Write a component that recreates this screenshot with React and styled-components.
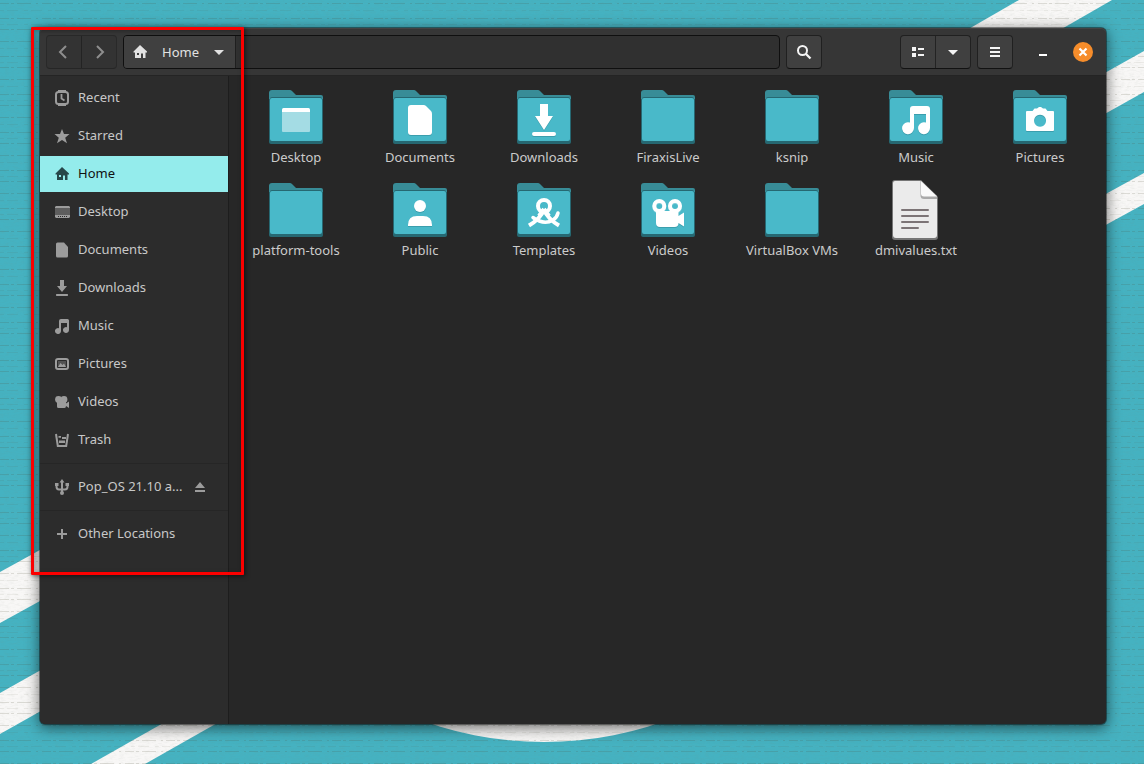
import React from "react";
import styled, { createGlobalStyle, css } from "styled-components";

const GlobalStyle = createGlobalStyle`
  *, *::before, *::after { box-sizing: border-box; }
  body {
    margin: 0;
    background: #45b1c0;
    font-family: "Noto Sans", "Open Sans", sans-serif;
    font-size: 13px;
    line-height: 17px;
    color: #cbcbcb;
  }
  button { font: inherit; color: inherit; padding: 0; margin: 0; cursor: pointer; }
  a { color: inherit; text-decoration: none; }
  svg { display: block; flex: none; }
`;

const Screen = styled.div`
  position: relative;
  display: flex;
  min-height: 100vh;
  padding: 28px 38px 40px 40px;
  overflow: hidden;
`;

const WallpaperArt = styled.svg`
  position: absolute;
  inset: 0;
  width: 100%;
  height: 100%;
`;

const Window = styled.main`
  position: relative;
  flex: 1;
  min-width: 0;
  display: flex;
  flex-direction: column;
  border-radius: 5px;
  background: #272727;
  box-shadow: 0 0 0 1px rgba(0, 0, 0, 0.4), 0 3px 14px 1px rgba(0, 0, 0, 0.55);
`;

const HeaderBar = styled.header`
  display: flex;
  align-items: center;
  gap: 6px;
  padding: 7px 13px 6px 6px;
  border-bottom: 1px solid #242424;
  border-radius: 5px 5px 0 0;
  background: #363636;
  box-shadow: inset 0 1px #434343;
`;

const ButtonGroup = styled.div`
  display: flex;
  flex: none;
  height: 34px;
  border: 1px solid ${(p) => (p.$dim ? "#292929" : "#202020")};
  border-bottom-color: ${(p) => (p.$dim ? "#262626" : "#121212")};
  border-radius: 4px;
  background: ${(p) => (p.$dim ? "#333333" : "#404040")};
  color: ${(p) => (p.$dim ? "#8e8e8e" : "#f4f4f4")};
  overflow: hidden;
`;

const ToolButton = styled.button`
  display: grid;
  place-items: center;
  width: 34px;
  border: 0;
  background: transparent;
  & + & { width: 35px; border-left: 1px solid ${(p) => (p.$dim ? "#292929" : "#232323")}; }
`;

const PathBar = styled.nav`
  display: flex;
  flex: 1;
  min-width: 0;
  height: 34px;
  border: 1px solid #0f0f0f;
  border-radius: 4px;
  background: #303030;
  overflow: hidden;
`;

const Crumb = styled.button`
  display: flex;
  align-items: center;
  padding: 0 8px;
  border: 0;
  border-right: 1px solid #1f1f1f;
  background: #404040;
  color: #e2e2e2;
`;

const CrumbLabel = styled.span`
  padding: 0 12px 0 14px;
`;

const ViewTools = styled.div`
  display: flex;
  align-items: center;
  gap: 6px;
  padding-left: 72px;
`;

const WindowControls = styled.div`
  display: flex;
  align-items: center;
  gap: 20px;
  padding-left: 14px;
`;

const WindowButton = styled.button`
  display: grid;
  place-items: center;
  width: 20px;
  height: 20px;
  border: 0;
  border-radius: 50%;
  background: ${(p) => (p.$close ? "#f68d2b" : "transparent")};
  color: #ffffff;
`;

const Body = styled.div`
  flex: 1;
  display: flex;
`;

const Sidebar = styled.nav`
  flex: none;
  display: flex;
  flex-direction: column;
  gap: 2px;
  width: 189px;
  padding-top: 4px;
  border-right: 1px solid #1d1d1d;
  border-radius: 0 0 0 5px;
  background: #2c2c2c;
`;

const PlaceRow = styled.div`
  display: flex;
  align-items: center;
  height: 36px;
  padding-right: 20px;
  color: #c8c8c8;
  ${(p) => p.$active && css`
    background: #94ecec;
    color: #111111;
  `}
`;

const PlaceLink = styled.a`
  flex: 1;
  min-width: 0;
  display: flex;
  align-items: center;
  gap: 8px;
  padding-left: 14px;
  svg { color: ${(p) => (p.$active ? "#27474a" : "#9c9c9c")}; }
`;

const PlaceName = styled.span`
  white-space: nowrap;
  padding-bottom: 1px;
`;

const EjectButton = styled.button`
  margin-left: 8px;
  border: 0;
  background: transparent;
  color: #9c9c9c;
`;

const Divider = styled.hr`
  width: 100%;
  height: 1px;
  margin: 3px 0;
  border: 0;
  background: #262626;
`;

const FileGrid = styled.section`
  flex: 1;
  min-width: 0;
  display: grid;
  grid-template-columns: repeat(auto-fill, 124px);
  align-content: start;
  row-gap: 12px;
  padding: 9px 4px 9px 5px;
`;

const FileItem = styled.a`
  display: flex;
  flex-direction: column;
  align-items: center;
  white-space: nowrap;
`;

const Highlight = styled.div`
  position: absolute;
  top: -1px;
  left: -9px;
  width: 213px;
  height: 548px;
  border: 3px solid #fb0000;
  border-radius: 1px;
  box-shadow: 1px 1px 5px rgba(0, 0, 0, 0.6), inset 1px 1px 4px rgba(0, 0, 0, 0.3);
  pointer-events: none;
`;

function Wallpaper() {
  return (
    <WallpaperArt viewBox="0 0 1144 764" preserveAspectRatio="xMidYMid slice" aria-hidden="true">
      <defs>
        <filter id="grain" x="0" y="0" width="100%" height="100%">
          <feTurbulence type="fractalNoise" baseFrequency="0.2 0.6" numOctaves="3" seed="4" />
          <feColorMatrix values="0 0 0 0 0.2  0 0 0 0 0.25  0 0 0 0 0.2  1.2 0 0 0 -0.5" />
        </filter>
        <pattern id="weave" width="83" height="38" patternUnits="userSpaceOnUse">
          <path
            d="M0 3.500H83M0 18.500H83M0 29.500H83"
            stroke="#4a4a30"
            strokeOpacity="0.16"
            strokeDasharray="9 2 3 3 14 5 2 4"
          />
          <path d="M0 10.500H83M0 24.500H83" stroke="#4a4a30" strokeOpacity="0.08" strokeDasharray="4 3 11 6" />
        </pattern>
      </defs>
      <rect width="1144" height="764" fill="#45b2c1" />
      <g fill="#f8f7f6">
        <path d="M1019 0H1112L968 83H875Z" />
        <path d="M1144 51V92L1060 139V98Z" />
        <path d="M1144 173V204L1060 250V219Z" />
        <path d="M0 572L80 528V579L0 623Z" />
        <path d="M0 693L80 648V689L0 734Z" />
        <path d="M91 764L195 705H249L145 764Z" />
        <circle cx="544" cy="385" r="357" />
      </g>
      <rect width="1144" height="764" fill="url(#weave)" />
      <rect width="1144" height="764" filter="url(#grain)" opacity="0.15" />
    </WallpaperArt>
  );
}

const glyphs = {
  back: <path d="M10 2L4 8l6 6" fill="none" stroke="currentColor" strokeWidth="2" />,
  forward: <path d="M6 2l6 6-6 6" fill="none" stroke="currentColor" strokeWidth="2" />,
  caret: <path d="M3 6h10L8 11z" />,
  search: (
    <>
      <circle cx="6.500" cy="6.500" r="4.500" fill="none" stroke="currentColor" strokeWidth="2" />
      <path d="M10 10l4.500 4.500" fill="none" stroke="currentColor" strokeWidth="2.300" />
    </>
  ),
  list: <path d="M2 3h4v4H2zM2 9h4v4H2zM8 4h6v2H8zM8 10h6v2H8z" />,
  menu: <path d="M3 3h10v2H3zM3 7h10v2H3zM3 11h10v2H3z" />,
  minimize: <path d="M4 10h8v2H4z" />,
  close: <path d="M4.500 4.500l7 7M11.500 4.500l-7 7" fill="none" stroke="currentColor" strokeWidth="2.200" />,
  recent: (
    <>
      <rect x="2" y="2" width="12" height="12" rx="2.500" fill="none" stroke="currentColor" strokeWidth="2" />
      <path d="M4 0h8v2H4zM4 14h8v2H4z" />
      <path d="M7.500 4v4.500l3 2" fill="none" stroke="currentColor" strokeWidth="1.800" />
    </>
  ),
  star: <path d="M8 1l2 5h5.500l-4.300 3.700L13 15.300l-5-3.400-5 3.400 1.800-5.600L.5 6H6z" />,
  home: <path d="M8 1l7 6.500V8.500H13.500V14H11V9.500H9V14H3V8.500H1.500V7.500zM5 9v2h2V9z" fillRule="evenodd" />,
  desktop: (
    <>
      <path d="M1 4h15v7H1z" opacity=".45" />
      <path d="M2 2h13l1 1v1H1V3zM1 11h15v2l-1 1H2l-1-1z" />
      <path d="M4 12.500h1M6 12.500h1M8 12.500h1M10 12.500h1M12 12.500h1" stroke="#2c2c2c" />
    </>
  ),
  documents: <path d="M3.500 0.500H10L14 5v9q0 1.500-1.500 1.500h-9Q2 15.500 2 14V2Q2 .5 3.500.5z" />,
  downloads: <path d="M6 0h4v6h3L8 12 3 6h3zM2.500 14h11q.5 0 .5 1t-.5 1h-11Q2 16 2 15t.5-1z" />,
  music: <path d="M7 1h6.500Q15 1 15 2.500V12a3 3 0 1 1-2-2.800V5H7v8a3 3 0 1 1-2-2.800V3Q5 1 7 1z" />,
  pictures: (
    <>
      <rect x="2" y="3" width="12" height="10" rx="2" fill="none" stroke="currentColor" strokeWidth="2" />
      <path d="M4 5h8v6H4z" opacity=".35" />
      <path d="M4 11l2.500-4 2 2 1.500-1.500 2 3.500z" />
    </>
  ),
  videos: (
    <>
      <circle cx="4.500" cy="5.500" r="3.400" />
      <circle cx="10" cy="5.500" r="3.400" />
      <path d="M3 7h9v2.500L15 7.500v6.500l-3-2Q12 14 10.500 14h-6Q3 14 3 12.500z" />
    </>
  ),
  trash: (
    <>
      <path d="M2 2l1.800 12h8.400L14 2" fill="none" stroke="currentColor" strokeWidth="2" />
      <path d="M4.500 4H7v1.700H4.500zM8 5h4v2H8zM5 8.500h6V11H5z" />
    </>
  ),
  usb: (
    <>
      <path d="M8 2v12M2.500 5v2.500Q2.500 10.500 5 10.500h6q2.500 0 2.500-3V5" fill="none" stroke="currentColor" strokeWidth="2" />
      <path d="M8 0l2.500 3.500h-5zM1 4h3.500v3H1zM11.500 4H15v3h-3.500z" />
      <circle cx="8" cy="14" r="2" />
    </>
  ),
  plus: <path d="M7 3h2v4h4v2H9v4H7V9H3V7h4z" />,
  eject: <path d="M8 3l5 6H3zM3 11h10v2H3z" />,
};

function Glyph({ name, size = 16 }) {
  return (
    <svg width={size} height={size} viewBox="0 0 16 16" fill="currentColor" aria-hidden="true">
      {glyphs[name]}
    </svg>
  );
}

const emblems = {
  desktop: (
    <>
      <path d="M18 27h28v19q0 1-1 1H19q-1 0-1-1z" fill="#a4dce4" />
      <path d="M19.500 23h25q1.500 0 1.500 1.500V27H18v-2.500q0-1.500 1.500-1.500z" />
    </>
  ),
  documents: <path d="M23 20h12.500q1.500 0 2.500 1l5 5q1 1 1 2.500V47q0 3-3 3H23q-3 0-3-3V23q0-3 3-3z" />,
  downloads: <path d="M28 19h8v12h5l-9 14-9-14h5zM22 47h20a2 2 0 0 1 0 4H22a2 2 0 0 1 0-4z" />,
  music: <path d="M29 21h14q3 0 3 3v19a6 6 0 1 1-4-5.500V29H30v14a6 6 0 1 1-4-5.500V24q0-3 3-3z" />,
  pictures: <path fillRule="evenodd" d="M19 26h5.500l2-2.500H29L31 22h2l2 1.500h2.500l2 2.500H45q1 0 1 1v18q0 1-1 1H19q-1 0-1-1V27q0-1 1-1zM32 29.700a6 6 0 1 0 .1 0z" />,
  public: (
    <>
      <circle cx="32" cy="28" r="6" />
      <path d="M20 48v-1q0-9 9-9h6q9 0 9 9v1z" />
    </>
  ),
  templates: (
    <g fill="none" stroke="#ffffff" strokeWidth="4">
      <circle cx="32" cy="28" r="6" />
      <path d="M32 32q-4 9-15 15.500M32 32q4 9 15 15.500" />
      <path d="M32 31L27 38M32 31l5 7" />
      <path d="M21 39.500q11 8 20 2.500 4-2.500 5-7" strokeWidth="3.500" strokeLinecap="round" />
    </g>
  ),
  videos: (
    <>
      <circle cx="23.300" cy="28" r="5" fill="none" stroke="#ffffff" strokeWidth="4" />
      <circle cx="39" cy="28" r="5" fill="none" stroke="#ffffff" strokeWidth="4" />
      <path d="M21 33h20q1.500 0 1.500 1.500V38l5.500-3.500v14L42.500 45q0 4-4 4H24q-4 0-4-4V34z" />
    </>
  ),
};

function FolderIcon({ emblem }) {
  return (
    <svg width="64" height="64" viewBox="0 0 64 64" aria-hidden="true">
      <path d="M5 12h54v45q0 2-2 2H7q-2 0-2-2z" fill="#266872" />
      <path d="M8 5h18q1 0 2 1l4 4h25q2 0 2 2v2H5V8q0-3 3-3z" fill="#388c97" />
      <path d="M6 14q0-2 2-2h48q2 0 2 2v2H6z" fill="#266872" />
      <rect x="6" y="13" width="52" height="43" rx="2" fill="#49b9c9" />
      <g transform="translate(0 1)" opacity="0.25" fill="#12515b">
        {emblem && emblem !== "templates" && emblem !== "desktop" && emblems[emblem]}
      </g>
      <g fill="#ffffff">{emblems[emblem]}</g>
    </svg>
  );
}

function TextFileIcon() {
  return (
    <svg width="64" height="64" viewBox="0 0 64 64" aria-hidden="true">
      <path d="M11 2h26l17 17v40q0 3-3 3H11q-3 0-3-3V5q0-3 3-3z" fill="#767676" />
      <path d="M11 3h25.500L53 19v38q0 3-3 3H12q-3 0-3-3V5q0-2 2-2z" fill="#ebebeb" />
      <path d="M36.500 3v14.500q0 3.500 3.500 3.500h13v-3z" fill="#aaaaaa" />
      <path d="M37 3l16 15.500H40q-3 0-3-3z" fill="#fafafa" />
      <path d="M18 32h26M18 38h26M18 44h26M18 50h16" stroke="#7c7476" strokeWidth="2" strokeLinecap="round" />
    </svg>
  );
}

const places = [
  ["Recent", "recent"],
  ["Starred", "star"],
  ["Home", "home"],
  ["Desktop", "desktop"],
  ["Documents", "documents"],
  ["Downloads", "downloads"],
  ["Music", "music"],
  ["Pictures", "pictures"],
  ["Videos", "videos"],
  ["Trash", "trash"],
];

const files = [
  ["Desktop", "desktop"],
  ["Documents", "documents"],
  ["Downloads", "downloads"],
  ["FiraxisLive"],
  ["ksnip"],
  ["Music", "music"],
  ["Pictures", "pictures"],
  ["platform-tools"],
  ["Public", "public"],
  ["Templates", "templates"],
  ["Videos", "videos"],
  ["VirtualBox VMs"],
  ["dmivalues.txt", "text"],
];

function Place({ name, icon, active, children }) {
  return (
    <PlaceRow $active={active}>
      <PlaceLink href="#" $active={active} aria-current={active ? "page" : undefined}>
        <Glyph name={icon} />
        <PlaceName>{name}</PlaceName>
      </PlaceLink>
      {children}
    </PlaceRow>
  );
}

export default function App() {
  return (
    <Screen>
      <GlobalStyle />
      <Wallpaper />
      <Window>
        <HeaderBar>
          <ButtonGroup $dim>
            <ToolButton $dim aria-label="Back"><Glyph name="back" /></ToolButton>
            <ToolButton $dim aria-label="Forward"><Glyph name="forward" /></ToolButton>
          </ButtonGroup>
          <PathBar aria-label="Path">
            <Crumb>
              <Glyph name="home" />
              <CrumbLabel>Home</CrumbLabel>
              <Glyph name="caret" />
            </Crumb>
          </PathBar>
          <ButtonGroup>
            <ToolButton aria-label="Search"><Glyph name="search" /></ToolButton>
          </ButtonGroup>
          <ViewTools>
            <ButtonGroup>
              <ToolButton aria-label="List view"><Glyph name="list" /></ToolButton>
              <ToolButton aria-label="View options"><Glyph name="caret" /></ToolButton>
            </ButtonGroup>
            <ButtonGroup>
              <ToolButton aria-label="Menu"><Glyph name="menu" /></ToolButton>
            </ButtonGroup>
          </ViewTools>
          <WindowControls>
            <WindowButton aria-label="Minimize"><Glyph name="minimize" /></WindowButton>
            <WindowButton $close aria-label="Close"><Glyph name="close" /></WindowButton>
          </WindowControls>
        </HeaderBar>
        <Body>
          <Sidebar aria-label="Places">
            {places.map(([name, icon]) => (
              <Place key={name} name={name} icon={icon} active={name === "Home"} />
            ))}
            <Divider />
            <Place name="Pop_OS 21.10 a..." icon="usb">
              <EjectButton aria-label="Eject"><Glyph name="eject" /></EjectButton>
            </Place>
            <Divider />
            <Place name="Other Locations" icon="plus" />
          </Sidebar>
          <FileGrid aria-label="Files">
            {files.map(([name, kind]) => (
              <FileItem key={name} href="#">
                {kind === "text" ? <TextFileIcon /> : <FolderIcon emblem={kind} />}
                <span>{name}</span>
              </FileItem>
            ))}
          </FileGrid>
        </Body>
        <Highlight />
      </Window>
    </Screen>
  );
}
